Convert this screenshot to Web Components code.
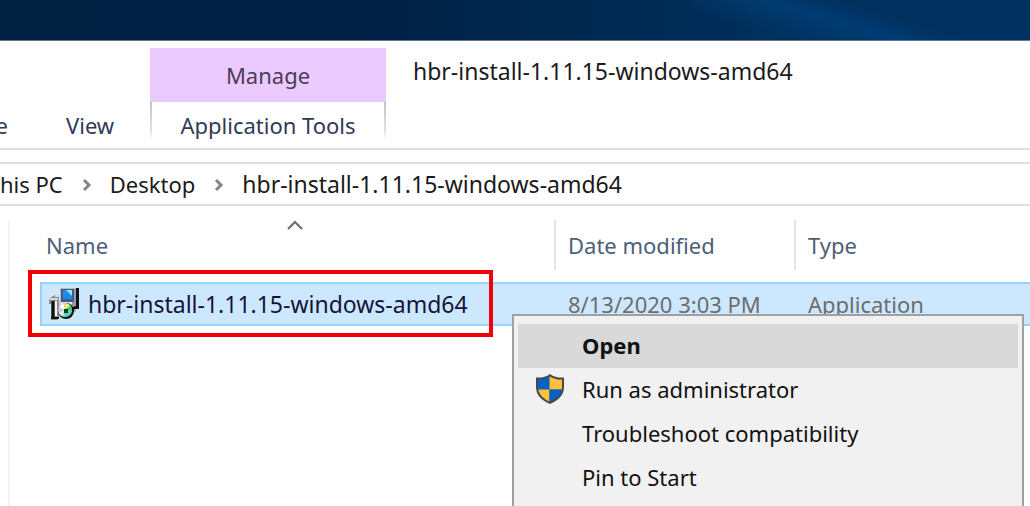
<!DOCTYPE html>
<html lang="en">
<head>
<meta charset="utf-8">
<title>File Explorer</title>
<style>
  body { margin: 0; font-family: "Noto Sans", "Open Sans", sans-serif; font-size: 22px; line-height: 30px; color: #1a1a1a; background: #fff; overflow: hidden; --name-size: 23px; }
</style>
</head>
<body>
<explorer-window>
  <ribbon-bar slot="ribbon" heading="hbr-install-1.11.15-windows-amd64"></ribbon-bar>
  <address-bar slot="address"></address-bar>
  <file-list slot="files"></file-list>
  <context-menu slot="menu">
    <menu-entry default>Open</menu-entry>
    <menu-entry shield>Run as administrator</menu-entry>
    <menu-entry>Troubleshoot compatibility</menu-entry>
    <menu-entry>Pin to Start</menu-entry>
  </context-menu>
</explorer-window>
<script>
const define = (name, html, setup) => customElements.define(name, class extends HTMLElement {
  constructor() {
    super();
    this.attachShadow({ mode: 'open' }).innerHTML = html;
  }
  connectedCallback() { if (setup) setup(this, this.shadowRoot); }
});

define('explorer-window', `
<style>
  :host { display: flex; flex-direction: column; position: relative; min-height: 100vh; overflow: hidden; }
  .wallpaper { flex: none; height: 40px; border-bottom: 1px solid #5b7b9d;
    background:
      linear-gradient(197deg, transparent 40%, #00438099 56%, #00438000 80%) right / 340px 100% no-repeat,
      linear-gradient(90deg, #002142, #002044 35%, #00284f 55%, #00305c 75%, #003161); }
  .files { flex: 1; display: flex; }
  ::slotted(file-list) { flex: 1; }
</style>
<div class="wallpaper"></div>
<slot name="ribbon"></slot>
<slot name="address"></slot>
<div class="files"><slot name="files"></slot></div>
<slot name="menu"></slot>`);

define('ribbon-bar', `
<style>
  :host { display: flex; align-items: flex-start; padding-top: 7px; height: 100px; border-bottom: 2px solid #e0e0e0; }
  button { border: 0; padding: 0; background: none; font: inherit; color: #333; white-space: nowrap; }
  .tabs { display: flex; align-self: flex-end; height: 46px; width: 150px; flex: none; }
  .share { width: 8px; display: flex; justify-content: flex-end; align-items: center; height: 46px; }
  .view { margin-left: 58px; height: 46px; }
  .share, .view, .tools { color: #303a55; }
  .context { width: 236px; flex: none; display: flex; flex-direction: column; }
  .manage { height: 54px; background: #eacaff; color: #4b3d57; }
  .tools { height: 46px; border: solid; border-width: 0 2px; border-image: linear-gradient(#c4c4c4, #e0e0e0 60%, transparent 80%) 1; }
  h1 { margin: 8px 0 0 27px; font: inherit; font-size: var(--name-size); color: #1a1a1a; white-space: nowrap; }
</style>
<div class="tabs"><button class="share">e</button><button class="view">View</button></div>
<div class="context"><button class="manage">Manage</button><button class="tools">Application Tools</button></div>
<h1></h1>`, (el, root) => { root.querySelector('h1').textContent = el.getAttribute('heading'); });

define('address-bar', `
<style>
  :host { display: block; margin-top: 12px; border: solid #e0e0e0; border-width: 2px 0; }
  nav { display: flex; align-items: center; height: 40px; white-space: nowrap; }
  a { color: #1a1a1a; text-decoration: none; }
  a[aria-current] { font-size: var(--name-size); }
  svg { width: 10px; height: 14px; margin: 2px 18px 0 19px; flex: none; }
  path { fill: none; stroke: #858585; stroke-width: 3; }
</style>
<nav aria-label="Path">
  <a href="#pc">his PC</a>
  <svg viewBox="0 0 10 14"><path d="M2 2l5 5-5 5"/></svg>
  <a href="#desktop">Desktop</a>
  <svg viewBox="0 0 10 14"><path d="M2 2l5 5-5 5"/></svg>
  <a href="#folder" aria-current="page">hbr-install-1.11.15-windows-amd64</a>
</nav>`);

define('installer-icon', `
<style>:host { display: block; width: 32px; height: 34px; flex: none; } svg { display: block; }</style>
<svg width="32" height="34" viewBox="0 0 32 34">
  <path d="M12 1h16v24h-5l-3-2h-8z" fill="#b9b9c1"/>
  <path d="M28 1h3v21h-4l-3 3v-4l4-3z" fill="#111"/>
  <path d="M24 2h4v17h-4z" fill="#9b9ba3"/>
  <path d="M13 2h13v13H13z" fill="#46578c"/>
  <path d="M15 3h9v9h-9z" fill="#178de8"/>
  <path d="M18 3h6v6z" fill="#8be5ff"/>
  <path d="M13 15h11v2H13z" fill="#e8e8ec"/>
  <path d="M2 11l5-3 4 2v21l-2 2H3V17H1v-4z" fill="#8c8c8c"/>
  <path d="M2 12h8M7 9h5" stroke="#d8d8d8" stroke-width="2"/>
  <path d="M5 14v16" stroke="#111" stroke-width="3"/>
  <path d="M8 14v15" stroke="#f2f2f2" stroke-width="2"/>
  <path d="M3 31h8" stroke="#111" stroke-width="2"/>
  <circle cx="18" cy="24" r="8" fill="#111"/>
  <circle cx="17" cy="23" r="7" fill="#c9cdd0"/>
  <path d="M17 23l-6-3 4-4z" fill="#fff"/>
  <path d="M17 23v-7l5 2z" fill="#f7ec60"/>
  <path d="M17 23l6-5 1 6z" fill="#25d96e"/>
  <path d="M17 23l-1 7 6-2 1-3z" fill="#38dcca"/>
  <path d="M17 23l-6 3 3 3z" fill="#d9f8ff"/>
  <path d="M16 22h4v4h-4z" fill="#103c18"/>
</svg>`);

define('file-list', `
<style>
  :host { display: flex; position: relative; padding-left: 8px; }
  .pane { flex: 1; margin-top: 14px; border-left: 2px solid #f4f4f4; padding-left: 30px; }
  table { width: 100%; border-collapse: separate; border-spacing: 0; table-layout: fixed; }
  th, td { padding: 0; font-weight: 400; text-align: left; vertical-align: top; white-space: nowrap; }
  th { height: 62px; color: #4c607a; }
  .name { width: 514px; } .date { width: 240px; }
  .head { height: 50px; box-sizing: border-box; padding: 10px 0 0 12px; border-left: 2px solid #e5e5e5; }
  .name .head { border: 0; padding: 0 10px 0 6px; display: flex; flex-direction: column; }
  .name svg { display: block; align-self: center; flex: none; height: 10px; }
  td { height: 40px; border: solid #99d1ff; border-width: 2px 0; background: #cce8ff; color: #6d6d6d; vertical-align: middle; padding-left: 14px; }
  td:first-child { border-left-width: 2px; padding-left: 6px; color: #14143a; font-size: var(--name-size); }
  .file { display: flex; align-items: center; gap: 8px; }
  .mark { position: absolute; left: 28px; top: 64px; width: 457px; height: 59px; border: 4px solid #f00008; pointer-events: none; }
</style>
<div class="pane">
  <table>
    <thead><tr>
      <th class="name" scope="col"><div class="head"><svg width="18" height="10" viewBox="0 0 18 10"><path d="M2 9l7-7 7 7" fill="none" stroke="#6a6a6a" stroke-width="2"/></svg>Name</div></th>
      <th class="date" scope="col"><div class="head">Date modified</div></th>
      <th scope="col"><div class="head">Type</div></th>
    </tr></thead>
    <tbody><tr>
      <td><div class="file"><installer-icon></installer-icon>hbr-install-1.11.15-windows-amd64</div></td>
      <td>8/13/2020 3:03 PM</td>
      <td>Application</td>
    </tr></tbody>
  </table>
</div>
<div class="mark"></div>`);

define('context-menu', `
<style>
  :host { display: block; position: absolute; left: 512px; top: 314px; bottom: -8px; width: 500px; padding: 8px 4px; border: 2px solid #a0a0a0; background: #f1f1f1; }
</style>
<div role="menu"><slot></slot></div>`);

define('menu-entry', `
<style>
  :host { display: block; }
  button { display: flex; align-items: center; width: 100%; height: 44px; padding: 0 0 2px; border: 0; background: none; font: inherit; color: #111; text-align: left; white-space: nowrap; }
  :host([default]) button { background: #d9d9d9; font-weight: 700; }
  .icon { width: 64px; display: flex; justify-content: center; flex: none; }
  svg { display: none; }
  :host([shield]) svg { display: block; }
</style>
<button role="menuitem"><span class="icon"><svg width="30" height="32" viewBox="0 0 30 32">
  <path d="M15 1C11 4 6 5 1 4.500V14c0 8 5 13 14 17 9-4 14-9 14-17V4.500C24 5 19 4 15 1z" fill="#454a52"/>
  <path d="M14.500 3.500C11 6 7 7 3 6.500V14c0 1 0 1.500.3 2.500h11.200z" fill="#0962c8"/>
  <path d="M14.500 3.500C19 6 23 7 27 6.500V14c0 1 0 1.500-.3 2.500H14.500z" fill="#ffc13a"/>
  <path d="M3.300 16.500C4.500 22 8 25.500 14.500 28.600V16.500z" fill="#ffc13a"/>
  <path d="M26.700 16.500C25.500 22 22 25.500 14.500 28.600V16.500z" fill="#0962c8"/>
</svg></span><slot></slot></button>`);
</script>
</body>
</html>
